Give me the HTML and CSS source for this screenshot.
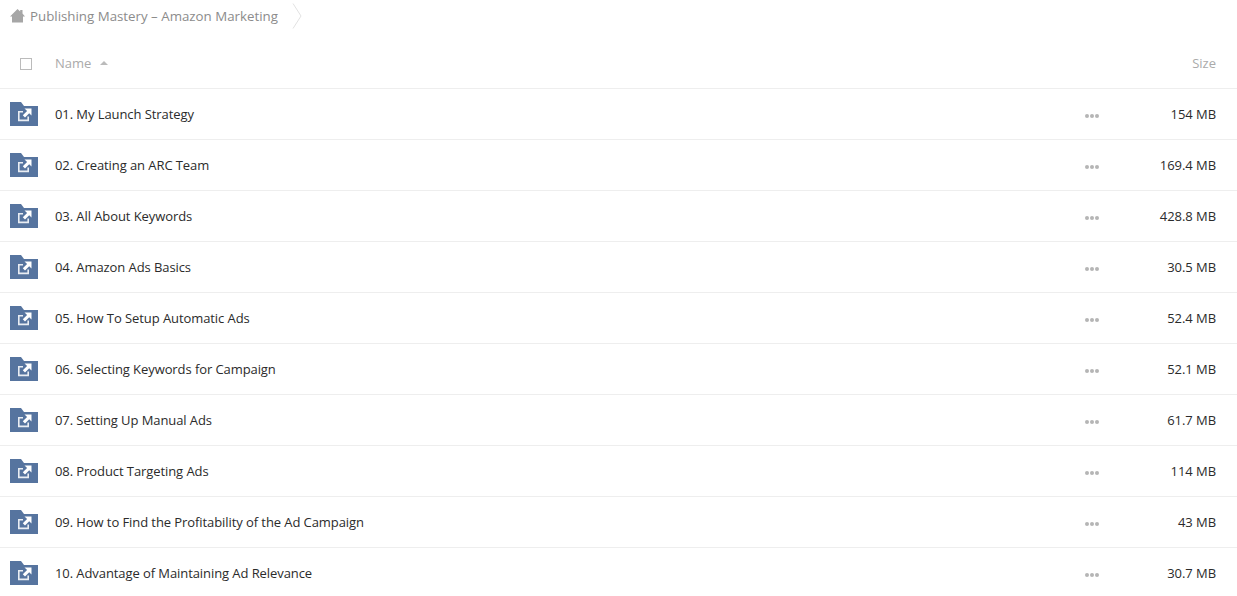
FILE: index.html
```html
<!DOCTYPE html>
<html lang="en">
<head>
<meta charset="utf-8">
<title>Publishing Mastery – Amazon Marketing</title>
<link rel="stylesheet" href="styles.css">
</head>
<body>
<svg class="defs" width="0" height="0" aria-hidden="true">
  <symbol id="folder" viewBox="0 0 28 24">
    <path fill="#56749f" d="M0 4V0h11l3 4h14v20H0z"/>
    <path fill="none" stroke="#e9edf3" stroke-width="1.6" d="M13 9.800H8.800v8.600h9.400v-3.800"/>
    <path fill="#fff" d="M14.500 6.500H21.500v7l-2.300-2.300-4.200 4.300-2.200-2.200 4.300-4.200z"/>
  </symbol>
</svg>
<nav class="crumbs">
  <svg class="home" width="15" height="14" viewBox="0 0 15 14"><path fill="#a6a6a6" d="M7.500 0l2.700 2.400V1h2.300v3.500L15 7.500h-2V13.500H2V7.500H0z"/></svg>
  <span class="crumb">Publishing Mastery – Amazon Marketing</span>
  <svg class="sep" width="10" height="26" viewBox="0 0 10 26"><path fill="none" stroke="#e2e2e2" d="M1 0.500l8 12.500-8 12.500"/></svg>
</nav>
<div class="head">
  <span class="check"></span>
  <span class="head-name">Name</span>
  <span class="sort"></span>
  <span class="head-size">Size</span>
</div>
<ul class="list">
  <li class="row"><svg class="folder"><use href="#folder"/></svg><span class="name">01. My Launch Strategy</span><span class="dots"><i></i><i></i><i></i></span><span class="size">154 MB</span></li>
  <li class="row"><svg class="folder"><use href="#folder"/></svg><span class="name">02. Creating an ARC Team</span><span class="dots"><i></i><i></i><i></i></span><span class="size">169.4 MB</span></li>
  <li class="row"><svg class="folder"><use href="#folder"/></svg><span class="name">03. All About Keywords</span><span class="dots"><i></i><i></i><i></i></span><span class="size">428.8 MB</span></li>
  <li class="row"><svg class="folder"><use href="#folder"/></svg><span class="name">04. Amazon Ads Basics</span><span class="dots"><i></i><i></i><i></i></span><span class="size">30.5 MB</span></li>
  <li class="row"><svg class="folder"><use href="#folder"/></svg><span class="name">05. How To Setup Automatic Ads</span><span class="dots"><i></i><i></i><i></i></span><span class="size">52.4 MB</span></li>
  <li class="row"><svg class="folder"><use href="#folder"/></svg><span class="name">06. Selecting Keywords for Campaign</span><span class="dots"><i></i><i></i><i></i></span><span class="size">52.1 MB</span></li>
  <li class="row"><svg class="folder"><use href="#folder"/></svg><span class="name">07. Setting Up Manual Ads</span><span class="dots"><i></i><i></i><i></i></span><span class="size">61.7 MB</span></li>
  <li class="row"><svg class="folder"><use href="#folder"/></svg><span class="name">08. Product Targeting Ads</span><span class="dots"><i></i><i></i><i></i></span><span class="size">114 MB</span></li>
  <li class="row"><svg class="folder"><use href="#folder"/></svg><span class="name">09. How to Find the Profitability of the Ad Campaign</span><span class="dots"><i></i><i></i><i></i></span><span class="size">43 MB</span></li>
  <li class="row"><svg class="folder"><use href="#folder"/></svg><span class="name">10. Advantage of Maintaining Ad Relevance</span><span class="dots"><i></i><i></i><i></i></span><span class="size">30.7 MB</span></li>
</ul>
</body>
</html>
```
FILE: styles.css
```css
html, body {
  margin: 0;
  padding: 0;
  height: 596px;
  overflow: hidden;
  background: #fff;
  font-family: "Open Sans", sans-serif;
  font-size: 13px;
  color: #2b2b2b;
}
.defs { display: block; height: 0; }
.crumbs {
  display: flex;
  align-items: center;
  height: 32px;
  padding-left: 10px;
}
.home { margin-right: 5px; }
.crumb { color: #8c8c8c; font-size: 13.3px; }
.sep { margin-left: 14px; }
.head {
  display: flex;
  align-items: center;
  height: 57px;
  padding: 6px 21px 0 20px;
  box-sizing: border-box;
  color: #aaa;
  border-bottom: 1px solid #eee;
}
.check {
  width: 10px;
  height: 10px;
  border: 1px solid #bbb;
  margin: 1px 23px 0 0;
}
.sort {
  width: 0;
  height: 0;
  margin-left: 9px;
  border: 4px solid transparent;
  border-top: 0;
  border-bottom: 4px solid #bbb;
}
.head-size { margin-left: auto; }
.list { margin: 0; padding: 0; list-style: none; }
.row {
  display: flex;
  align-items: center;
  height: 51px;
  box-sizing: border-box;
  padding: 0 21px 0 10px;
  border-bottom: 1px solid #eee;
}
.folder { width: 28px; height: 24px; margin-right: 17px; }
.name { flex: 1; letter-spacing: -0.08px; }
.dots { display: flex; gap: 1px; width: 14px; margin-top: 4px; }
.dots i { width: 4px; height: 4px; border-radius: 50%; background: #b5b5b5; }
.size { width: 117px; text-align: right; letter-spacing: -0.05px; }
```
